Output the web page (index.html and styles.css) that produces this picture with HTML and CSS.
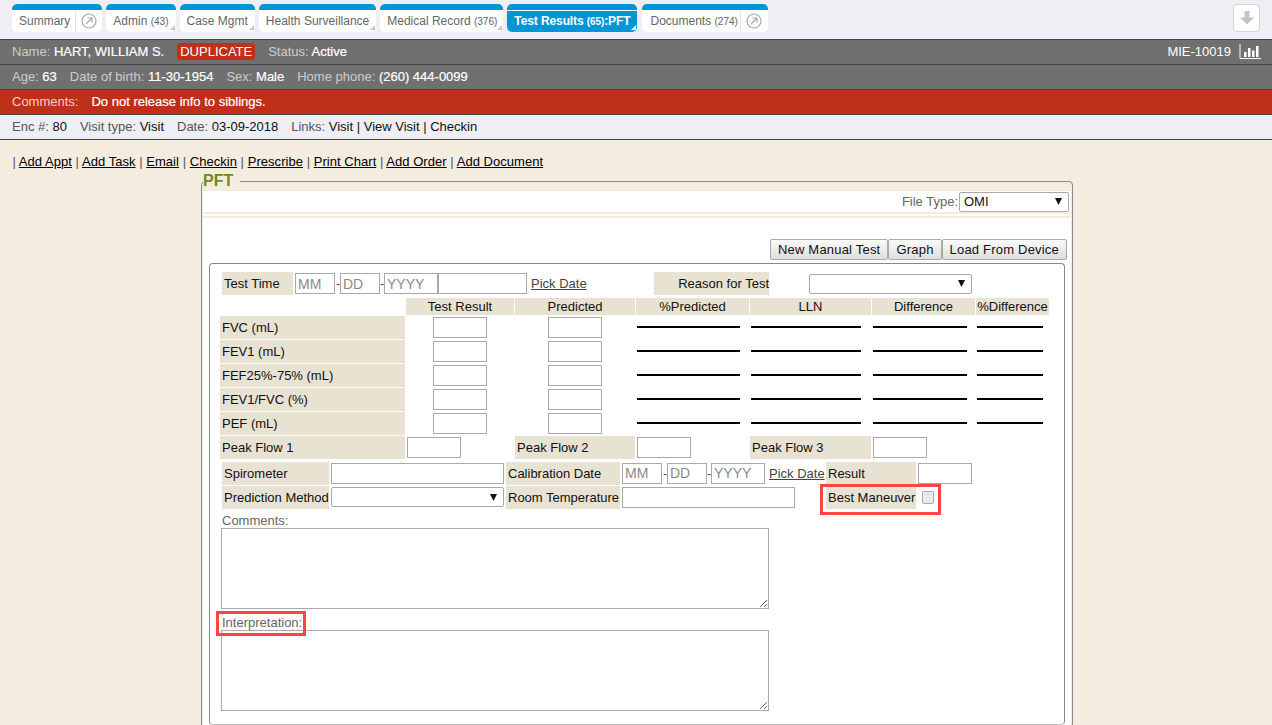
FILE: index.html
```html
<!DOCTYPE html>
<html lang="en">
<head>
<meta charset="utf-8">
<title>Test Results: PFT</title>
<link rel="stylesheet" href="styles.css">
</head>
<body>
<header class="topbar">
  <nav class="tabs">
    <a class="tab has-go"><span class="tab-label">Summary</span><span class="go"><svg width="16" height="16" viewBox="0 0 16 16"><circle cx="8" cy="8" r="7" fill="none" stroke="#a8a8a8" stroke-width="1.2"/><path d="M5 11 10.500 5.500M6.500 5H11V9.500" fill="none" stroke="#a8a8a8" stroke-width="1.2"/></svg></span></a>
    <a class="tab corner"><span class="tab-label">Admin <small>(43)</small></span></a>
    <a class="tab corner"><span class="tab-label">Case Mgmt</span></a>
    <a class="tab corner"><span class="tab-label">Health Surveillance</span></a>
    <a class="tab corner medical"><span class="tab-label">Medical Record <small>(376)</small></span></a>
    <a class="tab corner active"><span class="tab-label">Test Results <small>(65)</small>:PFT</span></a>
    <a class="tab has-go docs"><span class="tab-label">Documents <small>(274)</small></span><span class="go"><svg width="16" height="16" viewBox="0 0 16 16"><circle cx="8" cy="8" r="7" fill="none" stroke="#a8a8a8" stroke-width="1.2"/><path d="M5 11 10.500 5.500M6.500 5H11V9.500" fill="none" stroke="#a8a8a8" stroke-width="1.2"/></svg></span></a>
  </nav>
  <button class="collapse" type="button" aria-label="Collapse"><svg width="18" height="18" viewBox="0 0 18 18"><path d="M6.500 2h5v6.500H16L9 15.500 2 8.500h4.500z" fill="#c4c4c4"/></svg></button>
</header>

<section class="band dark">
  <span class="pair">Name: <b>HART, WILLIAM S.</b></span>
  <span class="badge">DUPLICATE</span>
  <span class="pair">Status: <b>Active</b></span>
  <span class="mrn">MIE-10019 <svg width="22" height="16" viewBox="0 0 22 16"><path d="M1 0v14.500h21" fill="none" stroke="#fff" stroke-width="1"/><path d="M5 8h2.500v5H5zM9 4h2.500v9H9zM13 6.500h2.500V13H13zM17 2h2.500v11H17z" fill="#fff"/></svg></span>
</section>
<section class="band dark">
  <span class="pair">Age: <b>63</b></span>
  <span class="pair">Date of birth: <b>11-30-1954</b></span>
  <span class="pair">Sex: <b>Male</b></span>
  <span class="pair">Home phone: <b>(260) 444-0099</b></span>
</section>
<section class="band alert">
  <span class="comment-key">Comments:</span>
  <b>Do not release info to siblings.</b>
</section>
<section class="band light">
  <span class="pair">Enc #: <em>80</em></span>
  <span class="pair">Visit type: <em>Visit</em></span>
  <span class="pair">Date: <em>03-09-2018</em></span>
  <span class="pair">Links: <em>Visit | View Visit | Checkin</em></span>
</section>

<main class="page">
  <p class="actions">| <a>Add Appt</a> | <a>Add Task</a> | <a>Email</a> | <a>Checkin</a> | <a>Prescribe</a> | <a>Print Chart</a> | <a>Add Order</a> | <a>Add Document</a></p>

  <fieldset class="panel">
    <legend>PFT</legend>
    <div class="panel-body">
      <div class="file-row">
        <label class="muted">File Type:</label>
        <select class="select file-select"><option>OMI</option></select>
      </div>
      <div class="stripe"></div>
      <div class="stripe second"></div>
      <div class="toolbar">
        <button class="btn" type="button">New Manual Test</button><button class="btn" type="button">Graph</button><button class="btn" type="button">Load From Device</button>
      </div>

      <div class="form-box">
        <div class="line time-line">
          <span class="lab w71">Test Time</span>
          <input class="in w40 mr" placeholder="MM"><i class="dash">-</i><input class="in w40" placeholder="DD"><i class="dash">-</i><input class="in w54" placeholder="YYYY"><input class="in w89">
          <a class="pick">Pick Date</a>
          <span class="lab reason">Reason for Test</span>
          <select class="select reason-select"><option></option></select>
        </div>

        <div class="grid">
          <span></span>
          <span class="head">Test Result</span><span class="head">Predicted</span><span class="head">%Predicted</span><span class="head">LLN</span><span class="head">Difference</span><span class="head">%Difference</span>

          <span class="lab">FVC (mL)</span>
          <span class="cell"><input class="in w54"></span><span class="cell"><input class="in w54"></span>
          <span class="rule r1"></span><span class="rule r2"></span><span class="rule r3"></span><span class="rule r4"></span>

          <span class="lab">FEV1 (mL)</span>
          <span class="cell"><input class="in w54"></span><span class="cell"><input class="in w54"></span>
          <span class="rule r1"></span><span class="rule r2"></span><span class="rule r3"></span><span class="rule r4"></span>

          <span class="lab">FEF25%-75% (mL)</span>
          <span class="cell"><input class="in w54"></span><span class="cell"><input class="in w54"></span>
          <span class="rule r1"></span><span class="rule r2"></span><span class="rule r3"></span><span class="rule r4"></span>

          <span class="lab">FEV1/FVC (%)</span>
          <span class="cell"><input class="in w54"></span><span class="cell"><input class="in w54"></span>
          <span class="rule r1"></span><span class="rule r2"></span><span class="rule r3"></span><span class="rule r4"></span>

          <span class="lab">PEF (mL)</span>
          <span class="cell"><input class="in w54"></span><span class="cell"><input class="in w54"></span>
          <span class="rule r1"></span><span class="rule r2"></span><span class="rule r3"></span><span class="rule r4"></span>

          <span class="lab">Peak Flow 1</span>
          <span class="cell start"><input class="in w54"></span>
          <span class="lab flow">Peak Flow 2</span>
          <span class="cell start"><input class="in w54"></span>
          <span class="lab flow">Peak Flow 3</span>
          <span class="cell start"><input class="in w54"></span>
        </div>

        <div class="line spiro-line">
          <span class="lab w107">Spirometer</span>
          <input class="in w173">
          <span class="lab w114">Calibration Date</span>
          <input class="in w40 mr" placeholder="MM"><i class="dash">-</i><input class="in w40" placeholder="DD"><i class="dash">-</i><input class="in w54" placeholder="YYYY">
          <a class="pick tight">Pick Date</a>
          <span class="lab w90">Result</span>
          <input class="in w54">
        </div>
        <div class="line pred-line">
          <span class="lab w107">Prediction Method</span>
          <select class="select w173"><option></option></select>
          <span class="lab w114">Room Temperature</span>
          <input class="in w173">
          <span class="best">
            <span class="lab w90">Best Maneuver</span>
            <input class="check" type="checkbox">
          </span>
        </div>

        <label class="muted note comments">Comments:</label>
        <textarea class="area first"></textarea>
        <label class="muted note interp"><span class="interp-text">Interpretation:</span></label>
        <textarea class="area"></textarea>
      </div>
    </div>
  </fieldset>
</main>
</body>
</html>
```

FILE: styles.css
```css
*, *::before, *::after { box-sizing: border-box; }
html, body { margin: 0; height: 725px; overflow: hidden; }
body {
  background: #f4eddf;
  color: #000;
  font: 13px/15px "Liberation Sans", Arial, sans-serif;
}

/* top tabs */
.topbar {
  height: 39px;
  background: #eeeef4;
  padding: 4px 12px 0;
  display: flex;
  justify-content: space-between;
}
.tabs { display: flex; gap: 4px; }
.tab {
  height: 28px;
  display: flex;
  align-items: center;
  background: #fff;
  border-top: 6px solid #0096d6;
  border-radius: 5px;
  color: #666;
  font-size: 12px;
  position: relative;
  padding: 0 7px;
  white-space: nowrap;
}
.tab small { font-size: 10px; }
.tab.medical { padding-right: 6px; }
.tab.active { background: #0096d6; color: #fff; font-weight: bold; letter-spacing: -0.1px; box-shadow: inset 0 1px 0 #fff; }
.corner::after {
  content: "";
  position: absolute;
  right: 1px;
  bottom: 2px;
  border-style: solid;
  border-width: 0 0 5px 5px;
  border-color: transparent transparent #c8c8c8 transparent;
}
.active.corner::after { border-bottom-color: #fff; }
.has-go { padding-right: 0; }
.go {
  display: flex;
  align-items: center;
  justify-content: center;
  width: 27px;
  height: 22px;
  margin-left: 5px;
  border-left: 1px solid #e6e6e6;
}
.docs { margin-left: 1px; padding-left: 8px; }
.docs .go { margin-left: 2px; width: 28px; }
.collapse {
  width: 27px;
  height: 28px;
  padding: 0;
  display: flex;
  align-items: center;
  justify-content: center;
  background: #fff;
  border: 1px solid #d4d4d4;
  border-radius: 4px;
}

/* patient bands */
.band {
  height: 25px;
  padding: 0 12px 1px;
  display: flex;
  align-items: center;
  border-top: 1px solid #444;
}
.band b { font-weight: normal; -webkit-text-stroke: 0.2px currentColor; }
.dark { background: #707070; color: #ccc; gap: 13px; }
.dark b { color: #fff; }
.pair { white-space: pre; }
.alert { background: #bf3018; color: #f3cfc6; }
.alert b { color: #fff; margin-left: 13px; }
.light { background: #eeeef4; color: #555; gap: 13px; height: 26px; padding-bottom: 1px; border-bottom: 1px solid #444; }
.light em { font-style: normal; color: #111; }
.badge {
  background: #bf3018;
  color: #fff;
  line-height: 17px;
  padding: 0 3px;
  border-radius: 3px;
}
.mrn { margin-left: auto; color: #fff; display: flex; align-items: center; gap: 8px; margin-right: -1px; }

/* page */
.page { padding: 0 0 0 12px; }
.actions { margin: 14px 0 0; height: 15px; line-height: 15px; color: #555; white-space: nowrap; letter-spacing: 0.04px; text-indent: 0.5px; }
.actions a { color: #000; text-decoration: underline; }

.panel {
  margin: 3px 0 0 189px;
  width: 872px;
  height: 556px;
  padding: 1px 1px 0 1px;
  border: 1px solid #888;
  border-radius: 4px;
  min-width: 0;
}
.panel legend {
  margin-left: 0;
  padding: 0 7px 0 0;
  color: #6d8b22;
  font: bold 16px/18px "Liberation Sans", Arial, sans-serif;
}
.panel-body { background: #fff; height: 534px; }

.file-row { height: 21px; display: flex; align-items: center; justify-content: flex-end; gap: 1px; padding-right: 2px; }
.muted { color: #666; }
.stripe { height: 2px; background: #f4eddf; }
.stripe.second { margin-top: 2px; }

.toolbar { height: 45px; padding: 21px 4px 0 0; display: flex; justify-content: flex-end; }
.btn {
  height: 21px;
  padding: 0 7px;
  font: 13px/19px "Liberation Sans", Arial, sans-serif;
  letter-spacing: 0.2px;
  color: #111;
  background: linear-gradient(#fafafa, #dedede);
  border: 1px solid #a9a9a9;
  border-radius: 2px;
}

.form-box {
  margin: 0 6px;
  height: 462px;
  padding: 8px 0 0 12px;
  border: 1px solid #888;
  border-bottom-color: #c4c4c4;
  border-radius: 4px;
  color: #111;
}

.lab { background: #e8e2d2; display: flex; align-items: center; padding-left: 2px; height: 23px; white-space: nowrap; }
.line { display: flex; align-items: center; height: 24px; }
.time-line { height: 23px; }
.spiro-line { margin-top: 2px; }

.in {
  height: 21px;
  padding: 1px 2px;
  border: 1px solid #a9a9a9;
  background: #fff;
  font: 14px "Liberation Sans", Arial, sans-serif;
  border-radius: 0;
  margin: 0;
  flex: none;
}
.in::placeholder { color: #8a8a8a; opacity: 1; }
.dash { font-style: normal; width: 4px; color: #555; }
.mr { margin-right: 1px; }
.w40 { width: 40px; }
.w54 { width: 54px; }
.w89 { width: 89px; }
.w71 { width: 71px; margin-right: 2px; flex: none; }
.w90 { width: 90px; margin-right: 2px; flex: none; }
.w107 { width: 107px; margin-right: 2px; flex: none; }
.w114 { width: 114px; margin: 0 2px; flex: none; }
.w173 { width: 173px; flex: none; }

.pick { color: #444; text-decoration: underline; margin-left: 4px; flex: none; width: 55px; white-space: nowrap; }
.pick.tight { margin-right: 2px; }
.reason { width: 115px; margin-left: 68px; justify-content: flex-end; padding: 0; flex: none; }
.select {
  appearance: none;
  -webkit-appearance: none;
  height: 20px;
  padding: 0 0 0 4px;
  border: 1px solid #a9a9a9;
  border-radius: 2px;
  font: 13px "Liberation Sans", Arial, sans-serif;
  color: #111;
  background: #fff url("data:image/svg+xml,%3Csvg xmlns='http://www.w3.org/2000/svg' width='7' height='7'%3E%3Cpath d='M0 0h7L3.500 7z' fill='%23111'/%3E%3C/svg%3E") no-repeat right 6px center;
}
.file-select { width: 110px; }
.reason-select { width: 163px; margin-left: 40px; }

.grid {
  margin: 2px 0 0 -2px;
  display: grid;
  grid-template-columns: 186px 109px 121px 114px 122px 104px 74px;
  grid-template-rows: 18px repeat(6, 23px);
  row-gap: 1px;
  width: 830px;
}
.grid > span { display: flex; align-items: center; }
.grid > .head { background: #e8e2d2; justify-content: center; margin-right: 1px; height: 17px; align-self: end; }
.grid > .lab { margin-right: 1px; }
.cell { justify-content: center; padding-right: 2px; }
.cell.start { justify-content: flex-start; padding: 0 0 0 1px; }
.rule { height: 100%; }
.rule::after { content: ""; height: 2px; background: #000; display: block; margin-bottom: 1px; width: 100%; }
.r1 { padding: 0 10px 0 1px; }
.r2 { padding: 0 11px 0 1px; }
.r3 { padding: 0 9px 0 1px; }
.r4 { padding: 0 7px 0 1px; }

.best { position: relative; display: flex; align-items: center; margin-left: 31px; }
.best::after {
  content: "";
  position: absolute;
  left: -6px;
  top: -2px;
  width: 121px;
  height: 31px;
  border: 3px solid #f44;
  pointer-events: none;
}
.check {
  appearance: none;
  -webkit-appearance: none;
  width: 12px;
  height: 13px;
  margin: 0 0 0 4px;
  border: 1px solid #a9a9a9;
  border-radius: 2px;
  background: #e9e9e9;
  flex: none;
}
.note { display: block; height: 15px; line-height: 15px; }
.comments { margin-top: 4px; }
.interp { margin-top: 6px; position: relative; }
.interp-text::after {
  content: "";
  position: absolute;
  left: -6px;
  top: -4px;
  width: 90px;
  height: 25px;
  border: 3px solid #f44;
}
.area {
  display: block;
  width: 548px;
  height: 81px;
  margin: 0 0 0 -1px;
  border: 1px solid #a9a9a9;
  background: #fff;
  padding: 2px;
  font: 13px "Liberation Sans", Arial, sans-serif;
  border-radius: 0;
}
```
